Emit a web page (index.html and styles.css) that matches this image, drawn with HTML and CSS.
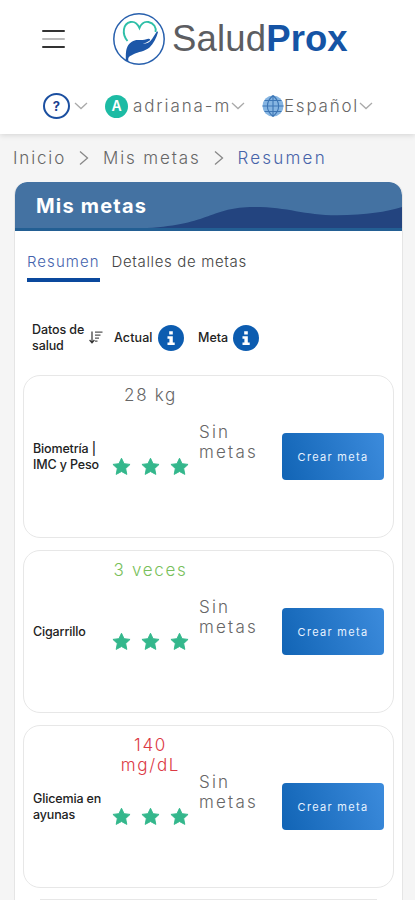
FILE: index.html
```html
<!DOCTYPE html>
<html lang="es">
<head>
<meta charset="utf-8">
<title>SaludProx</title>
<link rel="stylesheet" href="styles.css">
</head>
<body>
<svg class="defs" width="0" height="0">
  <symbol id="chevron" viewBox="0 0 14 8"><path d="M1 1l6 5.500L13 1" fill="none" stroke="#aaa" stroke-width="1.300"/></symbol>
  <symbol id="arrow" viewBox="0 0 10 16"><path d="M1 1.500l7.500 6.500L1 14.500" fill="none" stroke="#888" stroke-width="1.300"/></symbol>
  <symbol id="star" viewBox="0 0 20 19"><path d="M10 .8l2.700 5.700 6.300.8-4.600 4.300 1.200 6.200L10 14.800l-5.600 3 1.200-6.200L1 7.300l6.300-.8z" fill="#34b78c" stroke="#34b78c" stroke-linejoin="round"/></symbol>
  <symbol id="info" viewBox="0 0 26 26"><circle cx="13" cy="13" r="13" fill="#0c5cb0"/><path d="M11.200 6.200h3.600v3.300h-3.600zM9.500 11.300h5.300v6.200h1.900v2.400H9.500v-2.400h1.900v-3.800H9.500z" fill="#fff"/></symbol>
</svg>
<header class="top">
  <div class="brand-row">
    <div class="burger"><span></span><span></span><span></span></div>
    <div class="brand">
      <svg class="logo" viewBox="0 0 54 54">
        <circle cx="27" cy="27" r="25.200" fill="none" stroke="#2860ad" stroke-width="1.500"/>
        <path d="M15.500 29C9.500 22 11 11.500 18.500 10c4-.8 7 1.500 9 6 1.800-4.600 5.200-6.700 9-6 5.500 1 8 5.500 7 10" fill="none" stroke="#2fbfa8" stroke-width="1.900"/>
        <path d="M13.800 48c.2-3-.5-9 1.700-13.500 2.200-4.300 6.500-6.800 11-6.500 3.500.2 6.500 0 9.800-1.200 1.500-.5 2.500.8 1.400 1.800-2 1.700-4.400 2.400-7.200 3.300 4.500 0 7-1.500 9.500-4.800L44.500 20c.7-1 1.700-.5 1.400.6-1.400 5.200-4.400 11.200-8.400 14.900-4.500 4-11 4-16.500 7-3.500 1.900-5.500 2.500-4.500 7z" fill="#1d57a8"/>
      </svg>
      <span class="salud">Salud</span><span class="prox">Prox</span>
    </div>
  </div>
  <nav class="tools">
    <div class="tool help"><span class="question">?</span><svg class="chev"><use href="#chevron"/></svg></div>
    <div class="tool user"><span class="avatar">A</span><span class="user-name">adriana-m</span><svg class="chev"><use href="#chevron"/></svg></div>
    <div class="tool lang">
      <svg class="globe" viewBox="0 0 22 22"><circle cx="11" cy="11" r="10.500" fill="#86b5e2"/><path d="M11 .5v21M.5 11h21M2.500 5.500h17M2.500 16.500h17M11 .5C3.500 7 3.500 15 11 21.500M11 .5c7.500 6.500 7.500 14.500 0 21" fill="none" stroke="#3d76b5" stroke-width="1.100"/></svg>
      <span class="lang-name">Español</span><svg class="chev"><use href="#chevron"/></svg>
    </div>
  </nav>
</header>
<nav class="crumbs">
  <span>Inicio</span><svg class="sep"><use href="#arrow"/></svg><span>Mis metas</span><svg class="sep"><use href="#arrow"/></svg><span class="current">Resumen</span>
</nav>
<main class="panel">
  <div class="panel-head">
    <h1>Mis metas</h1>
    <svg class="wave" viewBox="0 0 260 24" preserveAspectRatio="none"><path d="M0 24C65 20 65 1 109 1c36 0 50 9 85 9 30 0 50-4 66-9v23H0z" fill="#23447f"/></svg>
  </div>
  <div class="tabs"><span class="tab active">Resumen</span><span class="tab">Detalles de metas</span></div>
  <div class="cols">
    <div class="col-name"><span>Datos de<br>salud</span>
      <svg class="sort" viewBox="0 0 14 13"><path d="M3 .5v11M.6 9L3 11.800 5.400 9" fill="none" stroke="#333" stroke-width="1.200"/><path d="M6 1.200h7.500M6 4.200h5.500M6 7.200h4M6 10.200h2.500" stroke="#555" stroke-width="1.300"/></svg>
    </div>
    <div class="col-actual"><span>Actual</span><svg class="info"><use href="#info"/></svg></div>
    <div class="col-meta"><span>Meta</span><svg class="info"><use href="#info"/></svg></div>
  </div>
  <section class="rows">
    <article class="row">
      <div class="name">Biometría |<br>IMC y Peso</div>
      <div class="actual"><div class="value">28 kg</div><div class="stars"><svg><use href="#star"/></svg><svg><use href="#star"/></svg><svg><use href="#star"/></svg></div></div>
      <div class="goal">Sin<br>metas</div>
      <button class="create">Crear meta</button>
    </article>
    <article class="row">
      <div class="name">Cigarrillo</div>
      <div class="actual"><div class="value good">3 veces</div><div class="stars"><svg><use href="#star"/></svg><svg><use href="#star"/></svg><svg><use href="#star"/></svg></div></div>
      <div class="goal">Sin<br>metas</div>
      <button class="create">Crear meta</button>
    </article>
    <article class="row">
      <div class="name">Glicemia en<br>ayunas</div>
      <div class="actual"><div class="value bad">140<br>mg/dL</div><div class="stars"><svg><use href="#star"/></svg><svg><use href="#star"/></svg><svg><use href="#star"/></svg></div></div>
      <div class="goal">Sin<br>metas</div>
      <button class="create">Crear meta</button>
    </article>
    <div class="next-row"></div>
  </section>
</main>
</body>
</html>
```
FILE: styles.css
```css
* { box-sizing: border-box; }
body {
  margin: 0;
  background: #f5f5f5;
  color: #666;
  font: 300 17px/20px Inter, "Open Sans", sans-serif;
}
svg { display: block; flex: none; }
.defs { position: absolute; }

.top {
  height: 134px;
  background: #fff;
  box-shadow: 0 1px 6px rgba(0, 0, 0, .14);
}
.brand-row { display: flex; align-items: center; height: 78px; padding-left: 42px; }
.burger { display: flex; flex-direction: column; gap: 6px; width: 23px; }
.burger span { height: 2px; border-radius: 1px; background: #333; }
.burger span:nth-child(2) { background: #bbb; }
.brand { display: flex; align-items: center; margin-left: 47px; font: 36.5px/50px "Liberation Sans", sans-serif; }
.logo { width: 54px; height: 54px; }
.salud { margin-left: 6px; color: #5c5d61; letter-spacing: .2px; }
.prox { color: #1554a5; font-weight: 700; }
.tools { display: flex; align-items: center; height: 56px; padding-left: 43px; }
.tool { display: flex; align-items: center; }
.chev { width: 14px; height: 8px; }
.help { width: 62px; gap: 4px; }
.question {
  display: grid;
  place-items: center;
  width: 27px;
  height: 26px;
  border: 2.5px solid #1b4fa0;
  border-radius: 50%;
  color: #1b3f90;
  font-size: 13px;
  font-weight: 700;
}
.user { width: 157px; }
.avatar {
  display: grid;
  place-items: center;
  width: 23px;
  height: 23px;
  margin-right: 5px;
  border-radius: 50%;
  background: #1dbba4;
  color: #fff;
  font-size: 14px;
  font-weight: 600;
}
.user-name { letter-spacing: 1.9px; }
.globe { width: 22px; height: 22px; }
.lang-name { letter-spacing: 1.75px; }

.crumbs { display: flex; align-items: center; height: 48px; padding-left: 13px; letter-spacing: 1.85px; }
.sep { width: 10px; height: 16px; margin: 0 14px 0 13px; }
.current { color: #4763a9; letter-spacing: 2.2px; }

.panel {
  width: 389px;
  height: 718px;
  margin-left: 14px;
  overflow: hidden;
  border: 1px solid #e5e5e5;
  border-width: 0 1px;
  border-radius: 13px 13px 0 0;
  background: #fff;
}
.panel-head {
  position: relative;
  width: 388px;
  height: 49px;
  margin-left: -1px;
  overflow: hidden;
  border-bottom: 3px solid #235f93;
  border-radius: 13px 13px 0 0;
  background: #4472a2;
}
h1 { margin: 0; padding: 14px 0 0 22px; color: #fff; font-size: 20px; line-height: 21px; font-weight: 700; letter-spacing: 1.2px; }
.wave { position: absolute; right: 0; bottom: 0; width: 255px; height: 22px; }
.tabs { display: flex; align-items: flex-end; gap: 12px; height: 51px; padding-left: 12px; color: #444; font-size: 15px; letter-spacing: 1.05px; }
.tab { height: 30px; border-bottom: 4px solid transparent; }
.tab + .tab { letter-spacing: .65px; }
.tab.active { border-color: #0a489d; color: #4463ad; }

.cols { display: flex; align-items: center; height: 47px; margin-top: 32px; padding-left: 17px; color: #222; font-size: 12.5px; line-height: 16px; font-weight: 500; }
.col-name { display: flex; align-items: center; gap: 3px; width: 82px; }
.col-name > span { letter-spacing: -.1px; width: 54px; white-space: nowrap; }
.sort { width: 14px; height: 13px; }
.col-actual, .col-meta { display: flex; align-items: center; gap: 5px; width: 84px; }
.col-actual { letter-spacing: .1px; }
.info { width: 26px; height: 26px; }

.rows { display: flex; flex-direction: column; gap: 12px; margin: 14px 0 0 8px; }
.row {
  display: grid;
  grid-template-columns: 76px 83px 90px 102px;
  align-items: start;
  flex: none;
  width: 371px;
  height: 163px;
  padding-left: 9px;
  border: 1.5px solid #e7e7e7;
  border-radius: 17px;
}
.next-row { width: 337px; height: 1px; margin-left: 17px; margin-top: -1px; background: #e7e7e7; }
.name { align-self: center; color: #222; font-size: 12.5px; line-height: 16px; font-weight: 500; letter-spacing: -.15px; white-space: nowrap; }
.actual { display: flex; flex-direction: column; align-items: center; height: 120px; padding-top: 9px; }
.value { height: 72px; text-align: center; letter-spacing: 1.7px; }
.good { color: #79bf5c; }
.bad { color: #dc3944; }
.stars { display: flex; gap: 10px; }
.stars svg { width: 19px; height: 19px; }
.goal { padding: 46px 0 0 7px; letter-spacing: 2.2px; }
.create {
  width: 102px;
  height: 47px;
  margin-top: 57px;
  padding: 0;
  border: 0;
  border-radius: 4px;
  background: linear-gradient(70deg, #1164b5, #3c8bdc);
  color: #e8f2ff;
  font: 400 11px/20px Inter, sans-serif;
  letter-spacing: 1.3px;
}
```
